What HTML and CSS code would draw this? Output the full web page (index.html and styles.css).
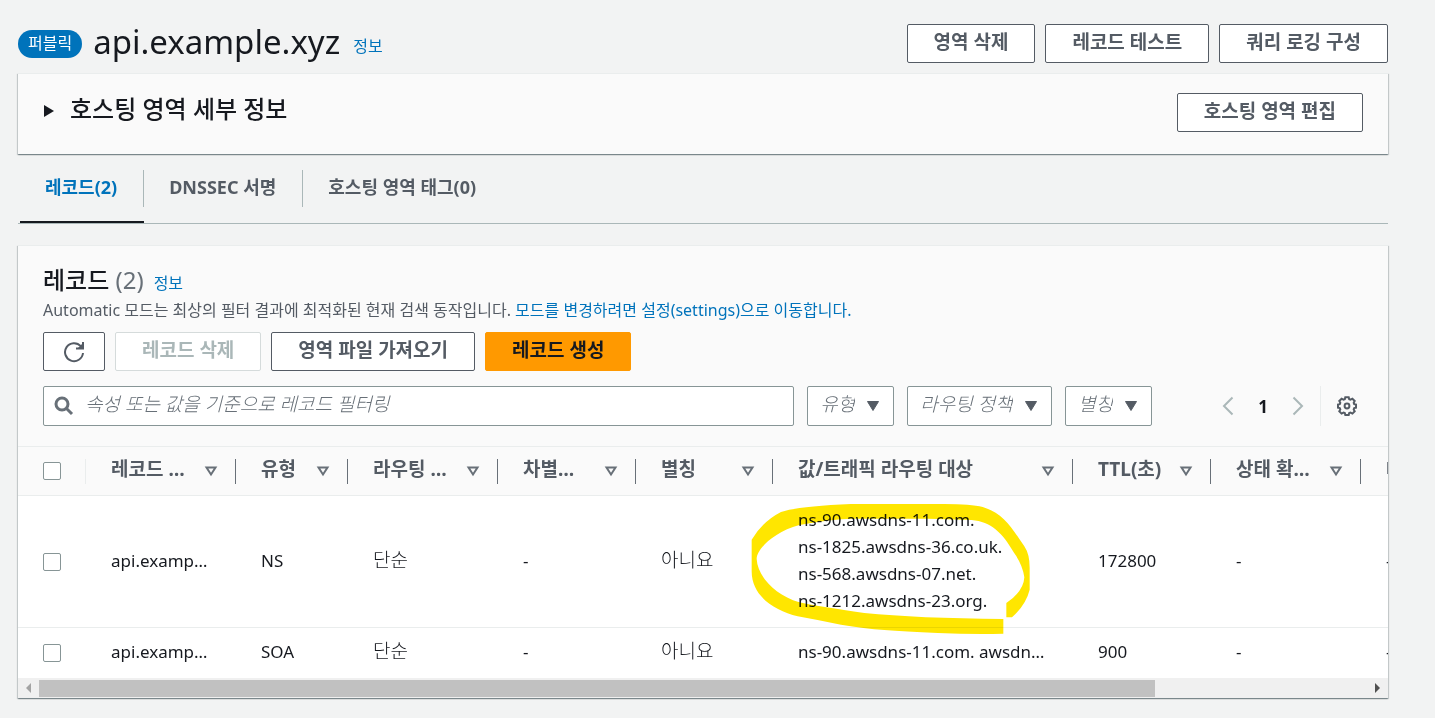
FILE: index.html
```
<!DOCTYPE html>
<html lang="ko">
<head>
<meta charset="utf-8">
<title>api.example.xyz</title>
<link rel="stylesheet" href="styles.css">
</head>
<body>
<main class="page">
  <header class="page-header">
    <span class="badge">퍼블릭</span>
    <h1 class="page-title">api.example.xyz</h1>
    <a class="info info-title" href="#">정보</a>
    <div class="actions">
      <button class="btn" type="button">영역 삭제</button>
      <button class="btn" type="button">레코드 테스트</button>
      <button class="btn" type="button">쿼리 로깅 구성</button>
    </div>
  </header>

  <section class="panel details">
    <button class="expander" type="button" aria-expanded="false">
      <svg class="caret" viewBox="0 0 12 14" aria-hidden="true"><path d="M1 1 L11 7 L1 13 Z"/></svg>
      <span>호스팅 영역 세부 정보</span>
    </button>
    <button class="btn" type="button">호스팅 영역 편집</button>
  </section>

  <nav class="tabs">
    <a class="tab active" href="#"><span class="tab-label">레코드(2)</span></a>
    <a class="tab" href="#"><span class="tab-label">DNSSEC 서명</span></a>
    <a class="tab" href="#"><span class="tab-label">호스팅 영역 태그(0)</span></a>
  </nav>

  <section class="panel records">
    <div class="records-head">
      <div class="title-row">
        <h2 class="title">레코드 <span class="count">(2)</span></h2>
        <a class="info" href="#">정보</a>
      </div>
      <p class="description">Automatic 모드는 최상의 필터 결과에 최적화된 현재 검색 동작입니다. <a href="#">모드를 변경하려면 설정(settings)으로 이동합니다.</a></p>
      <div class="toolbar">
        <button class="btn btn-icon" type="button" aria-label="새로 고침">
          <svg class="refresh" viewBox="0 0 22 22" aria-hidden="true"><path d="M17.800 5.200 A9 9 0 1 0 20 12"/><path d="M20 1 V7.500 H13"/><path class="solid" d="M20 2 V8 H14 Z"/></svg>
        </button>
        <button class="btn" type="button" disabled>레코드 삭제</button>
        <button class="btn" type="button">영역 파일 가져오기</button>
        <button class="btn btn-primary" type="button">레코드 생성</button>
      </div>
      <div class="filters">
        <label class="search">
          <svg class="search-icon" viewBox="0 0 20 20" aria-hidden="true"><circle cx="8" cy="8" r="6"/><path d="M12.500 12.500 L18 18"/></svg>
          <input class="search-input" type="text" aria-label="레코드 필터링" placeholder="속성 또는 값을 기준으로 레코드 필터링">
        </label>
        <div class="select-box">
          <select class="select" aria-label="유형"><option>유형</option></select>
          <svg class="select-arrow" viewBox="0 0 14 12" aria-hidden="true"><path d="M1.500 1.500 H12.500 L7 10.500 Z"/></svg>
        </div>
        <div class="select-box">
          <select class="select" aria-label="라우팅 정책"><option>라우팅 정책</option></select>
          <svg class="select-arrow" viewBox="0 0 14 12" aria-hidden="true"><path d="M1.500 1.500 H12.500 L7 10.500 Z"/></svg>
        </div>
        <div class="select-box">
          <select class="select" aria-label="별칭"><option>별칭</option></select>
          <svg class="select-arrow" viewBox="0 0 14 12" aria-hidden="true"><path d="M1.500 1.500 H12.500 L7 10.500 Z"/></svg>
        </div>
        <div class="pager">
          <button class="plain" type="button" aria-label="이전"><svg class="chevron" viewBox="0 0 12 20" aria-hidden="true"><path d="M10.500 1.500 L2 10 L10.500 18.500"/></svg></button>
          <button class="plain page-number" type="button">1</button>
          <button class="plain" type="button" aria-label="다음"><svg class="chevron" viewBox="0 0 12 20" aria-hidden="true"><path d="M1.500 1.500 L10 10 L1.500 18.500"/></svg></button>
        </div>
        <div class="settings">
          <button class="plain" type="button" aria-label="설정">
            <svg class="gear" viewBox="0 0 20 20" aria-hidden="true"><path d="M8.300 1.200 h3.400 l.5 2 1.300 .5 1.900 -1 2.300 2.300 -1 1.900 .5 1.300 1.800 .3 v3.200 l-1.800 .4 -.5 1.300 1 1.900 -2.300 2.300 -1.900 -1 -1.300 .5 -.5 1.900 h-3.400 l-.5 -1.900 -1.300 -.5 -1.900 1 -2.300 -2.300 1 -1.900 -.5 -1.300 -1.800 -.4 v-3.200 l1.800 -.3 .5 -1.300 -1 -1.900 2.300 -2.300 1.900 1 1.300 -.5 Z"/><circle cx="10" cy="10" r="2.400"/></svg>
          </button>
        </div>
      </div>
    </div>

    <div class="table-view">
      <table class="table">
        <colgroup>
          <col class="w-check"><col class="w-150"><col class="w-112"><col class="w-150"><col class="w-138"><col class="w-137"><col class="w-300"><col class="w-138"><col class="w-150"><col class="w-last">
        </colgroup>
        <thead>
          <tr>
            <th><div class="th-in th-check"><input class="check" type="checkbox" aria-label="모두 선택"></div></th>
            <th><div class="th-in"><span class="clip">레코드 이름</span><svg class="sort" viewBox="0 0 14 12" aria-hidden="true"><path d="M2.500 2.500 H11.500 L7 9.500 Z"/></svg></div></th>
            <th><div class="th-in"><span class="clip">유형</span><svg class="sort" viewBox="0 0 14 12" aria-hidden="true"><path d="M2.500 2.500 H11.500 L7 9.500 Z"/></svg></div></th>
            <th><div class="th-in"><span class="clip">라우팅 정책</span><svg class="sort" viewBox="0 0 14 12" aria-hidden="true"><path d="M2.500 2.500 H11.500 L7 9.500 Z"/></svg></div></th>
            <th><div class="th-in"><span class="clip">차별화 요소</span><svg class="sort" viewBox="0 0 14 12" aria-hidden="true"><path d="M2.500 2.500 H11.500 L7 9.500 Z"/></svg></div></th>
            <th><div class="th-in"><span class="clip">별칭</span><svg class="sort" viewBox="0 0 14 12" aria-hidden="true"><path d="M2.500 2.500 H11.500 L7 9.500 Z"/></svg></div></th>
            <th><div class="th-in"><span class="clip">값/트래픽 라우팅 대상</span><svg class="sort" viewBox="0 0 14 12" aria-hidden="true"><path d="M2.500 2.500 H11.500 L7 9.500 Z"/></svg></div></th>
            <th><div class="th-in"><span class="clip">TTL(초)</span><svg class="sort" viewBox="0 0 14 12" aria-hidden="true"><path d="M2.500 2.500 H11.500 L7 9.500 Z"/></svg></div></th>
            <th><div class="th-in"><span class="clip">상태 확인 ID</span><svg class="sort" viewBox="0 0 14 12" aria-hidden="true"><path d="M2.500 2.500 H11.500 L7 9.500 Z"/></svg></div></th>
            <th><div class="th-in"><span class="clip">대상 상태 평가</span></div></th>
          </tr>
        </thead>
        <tbody>
          <tr>
            <td class="td-check"><input class="check" type="checkbox" aria-label="NS 레코드 선택"></td>
            <td><div class="clip name">api.example.xyz</div></td>
            <td>NS</td>
            <td class="ko">단순</td>
            <td>-</td>
            <td class="ko">아니요</td>
            <td class="values">
              ns-90.awsdns-11.com.<br>ns-1825.awsdns-36.co.uk.<br>ns-568.awsdns-07.net.<br>ns-1212.awsdns-23.org.
              <svg class="marker" viewBox="60 40 840 396" aria-hidden="true"><path d="M817 388 V432 Q720 434 620 430 T460 421 T330 405 Q270 393 200 380 C130 362 62 320 62 245 V150 Q95 95 150 67 Q200 50 360 43 H640 Q720 43 755 52 C815 70 840 110 880 170 Q897 195 896 240 V300 Q885 345 843 383 H826 V340 Q878 305 880 263 Q875 225 848 188 C815 130 780 96 722 91 L590 87 H365 Q300 88 205 106 C125 128 77 180 77 208 C80 260 130 315 205 338 Q270 352 400 370 Q560 386 817 388 Z"/></svg>
            </td>
            <td>172800</td>
            <td>-</td>
            <td>-</td>
          </tr>
          <tr>
            <td class="td-check"><input class="check" type="checkbox" aria-label="SOA 레코드 선택"></td>
            <td><div class="clip name">api.example.xyz</div></td>
            <td>SOA</td>
            <td class="ko">단순</td>
            <td>-</td>
            <td class="ko">아니요</td>
            <td><div class="clip">ns-90.awsdns-11.com. awsdns-host</div></td>
            <td>900</td>
            <td>-</td>
            <td>-</td>
          </tr>
        </tbody>
      </table>
    </div>
    <div class="scrollbar" aria-hidden="true">
      <svg class="scroll-arrow off" viewBox="0 0 21 20"><path d="M13 5 V15 L8 10 Z"/></svg>
      <div class="scroll-track"><div class="scroll-thumb"></div></div>
      <svg class="scroll-arrow" viewBox="0 0 21 20"><path d="M8 5 V15 L13 10 Z"/></svg>
    </div>
  </section>
</main>
</body>
</html>
```
FILE: styles.css
```
* { box-sizing: border-box; }
body {
  margin: 0;
  background: #f2f3f3;
  color: #16191f;
  font-family: "Noto Sans", "Noto Sans CJK KR", sans-serif;
  font-size: 17px;
  line-height: 27px;
}
a { color: #0073bb; text-decoration: none; }
h1, h2, p { margin: 0; font-weight: 400; }
button, input, select { font-family: inherit; }
.page { padding: 22px 47px 20px 18px; }

.page-header { display: flex; align-items: center; height: 43px; margin-bottom: 8px; }
.badge {
  padding: 0 10px 2px;
  border-radius: 14px;
  background: #0073bb;
  color: #fff;
  font-size: 16px;
  line-height: 26px;
}
.page-title { margin-left: 11px; font-size: 33px; line-height: 38px; padding-bottom: 4px; }
.info { font-size: 16px; margin-left: 10px; }
.info-title { margin-left: 13px; padding-top: 5px; }
.actions { display: flex; gap: 10px; margin-left: auto; }
.btn {
  height: 39px;
  padding: 0 26px 4px;
  border: 1px solid #545b64;
  border-radius: 2px;
  background: #fff;
  color: #545b64;
  font-size: 19px;
  font-weight: 700;
  line-height: 28px;
  white-space: nowrap;
}
.btn:disabled { border-color: #d5dbdb; color: #aab7b8; }
.btn-primary { border-color: #ff9900; background: #ff9900; color: #16191f; }
.btn-icon { display: flex; align-items: center; padding: 0 19px; }
.refresh { width: 22px; height: 22px; fill: none; stroke: #545b64; stroke-width: 2; }
.refresh .solid { fill: #545b64; stroke: none; }

.panel {
  background: #fafafa;
  box-shadow: 0 1px 1px 0 rgba(0, 28, 36, .3), 1px 1px 1px 0 rgba(0, 28, 36, .15), -1px 1px 1px 0 rgba(0, 28, 36, .15);
  border-top: 1px solid #eaeded;
}
.details { display: flex; align-items: flex-start; justify-content: space-between; height: 81px; padding: 19px 25px 0; }
.expander {
  display: flex;
  align-items: center;
  gap: 15px;
  padding: 0;
  border: 0;
  background: none;
  color: #16191f;
  font-size: 24px;
  font-weight: 500;
  line-height: 32px;
}
.caret { width: 12px; height: 14px; margin-top: 4px; fill: #16191f; }

.tabs { display: flex; height: 70px; padding: 16px 0 0 2px; margin-bottom: 21px; border-bottom: 1px solid #aab7b8; }
.tab { color: #545b64; font-size: 18px; font-weight: 700; line-height: 34px; }
.tab-label { display: block; height: 37px; padding: 0 26px 0 25px; border-right: 1px solid #aab7b8; }
.tab:last-child .tab-label { border-right: 0; }
.tab.active { color: #0073bb; border-bottom: 2px solid #16191f; }

.records-head { padding: 17px 25px 20px; }
.title-row { display: flex; align-items: baseline; }
.title { font-size: 24px; font-weight: 500; line-height: 34px; }
.count { color: #687078; font-weight: 400; }
.description { color: #545b64; font-size: 16px; line-height: 26px; margin-bottom: 9px; }
.toolbar { display: flex; gap: 10px; margin-bottom: 15px; }
.filters { display: flex; align-items: center; gap: 13px; height: 40px; }
.search {
  display: flex;
  flex: 1;
  align-items: center;
  height: 40px;
  padding: 0 10px;
  gap: 11px;
  border: 1px solid #879596;
  border-radius: 2px;
  background: #fff;
}
.search-icon { width: 20px; height: 20px; fill: none; stroke: #687078; stroke-width: 3; }
.search-input { flex: 1; min-width: 0; padding: 0 0 4px; border: 0; background: none; font-size: 19px; font-style: italic; outline: 0; }
.search-input::placeholder { color: #687078; font-weight: 300; opacity: 1; }
.select-box { position: relative; }
.select {
  height: 40px;
  padding: 0 38px 4px 12px;
  border: 1px solid #879596;
  border-radius: 2px;
  background: #fff;
  color: #687078;
  appearance: none;
  font-size: 19px;
  font-style: italic;
  font-weight: 300;
}
.select-arrow { position: absolute; right: 14px; top: 14px; width: 14px; height: 12px; fill: #545b64; stroke: #545b64; pointer-events: none; }
.plain { display: flex; padding: 0; border: 0; background: none; }
.pager { display: flex; align-items: center; gap: 24px; margin-left: 57px; }
.chevron { width: 12px; height: 20px; fill: none; stroke: #aab7b8; stroke-width: 2; }
.page-number { color: #16191f; font-size: 17px; font-weight: 700; }
.settings { display: flex; align-items: center; height: 40px; margin-left: 3px; padding: 0 6px 0 16px; border-left: 1px solid #eaeded; }
.gear { width: 20px; height: 20px; fill: none; stroke: #545b64; stroke-width: 2; }

.table-view { overflow: hidden; border-top: 1px solid #eaeded; background: #fff; }
.table { width: 1630px; border-collapse: separate; border-spacing: 0; table-layout: fixed; }
.w-check { width: 68px; }
.w-112 { width: 112px; }
.w-137 { width: 137px; }
.w-138 { width: 138px; }
.w-150 { width: 150px; }
.w-300 { width: 300px; }
.w-last { width: 287px; }
th { height: 49px; padding: 0; background: #fafafa; border-bottom: 1px solid #eaeded; color: #545b64; font-size: 19px; font-weight: 700; text-align: left; }
.th-in { display: flex; align-items: center; justify-content: space-between; gap: 16px; height: 25px; padding: 0 17px 0 25px; border-right: 1px solid #687078; }
.th-check { border-right-color: #eaeded; }
.th-in .clip { padding-bottom: 3px; }
.clip { overflow: hidden; text-overflow: ellipsis; white-space: nowrap; }
.name { padding-right: 3px; }
.sort { flex: none; width: 14px; height: 12px; fill: none; stroke: #687078; stroke-width: 2; }
td { padding: 10px 24px 13px 25px; }
tr:first-child td { padding: 10px 24px 13px 25px; border-bottom: 1px solid #eaeded; }
td.td-check, tr:first-child td.td-check { padding-top: 12px; padding-bottom: 12px; }
.ko { font-size: 19px; font-weight: 300; }
.check { display: block; width: 18px; height: 18px; margin: 0; border: 1px solid #879596; border-radius: 2px; background: #fff; appearance: none; }
.values { position: relative; white-space: nowrap; }
.marker { position: absolute; left: -22px; top: 7px; width: 280px; height: 132px; fill: #ffe600; mix-blend-mode: multiply; pointer-events: none; }

.scrollbar { display: flex; height: 20px; background: #f0f0f0; }
.scroll-arrow { width: 21px; height: 20px; fill: #505050; }
.scroll-arrow.off { fill: #a3a3a3; }
.scroll-track { flex: 1; padding: 2px 0 1px; }
.scroll-thumb { width: 84%; height: 17px; background: #c1c1c1; }
```
